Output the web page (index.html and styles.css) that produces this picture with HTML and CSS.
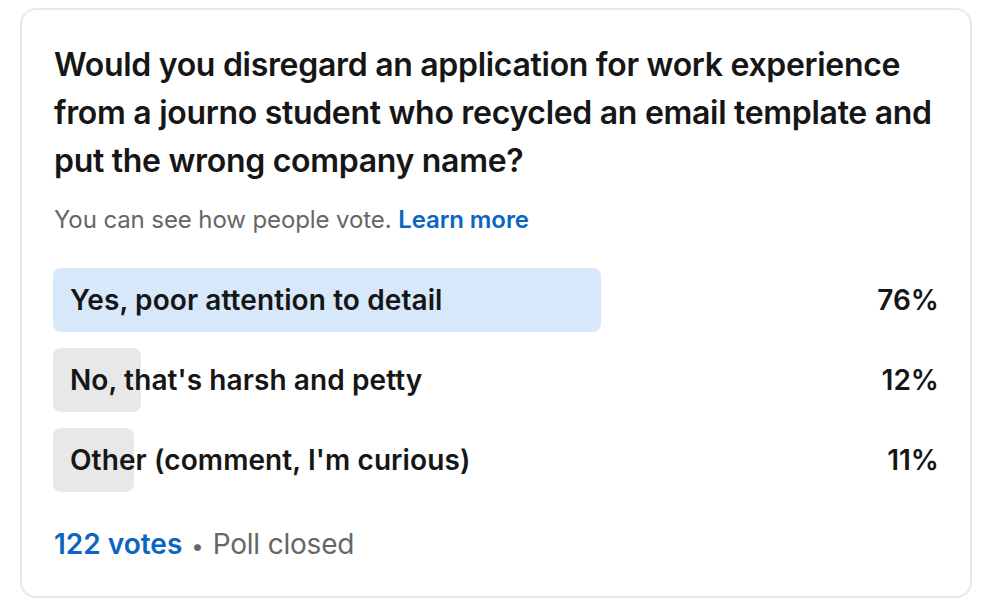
FILE: index.html
```html
<!DOCTYPE html>
<html lang="en">
<head>
<meta charset="utf-8">
<title>Poll</title>
<link rel="stylesheet" href="styles.css">
</head>
<body>
<div class="card">
  <h1 class="question">Would you disregard an application for work experience from a journo student who recycled an email template and put the wrong company name?</h1>
  <p class="note">You can see how people vote. <a class="link" href="#">Learn more</a></p>
  <ul class="options">
    <li class="option">
      <div class="track">
        <div class="fill fill-lead" style="width:548px"></div>
        <span class="label">Yes, poor attention to detail</span>
      </div>
      <span class="pct">76%</span>
    </li>
    <li class="option">
      <div class="track">
        <div class="fill" style="width:88px"></div>
        <span class="label">No, that's harsh and petty</span>
      </div>
      <span class="pct">12%</span>
    </li>
    <li class="option">
      <div class="track">
        <div class="fill" style="width:81px"></div>
        <span class="label">Other (comment, I'm curious)</span>
      </div>
      <span class="pct">11%</span>
    </li>
  </ul>
  <div class="footer">
    <a class="votes" href="#">122 votes</a>
    <span class="dot">•</span>
    <span class="status">Poll closed</span>
  </div>
</div>
</body>
</html>
```
FILE: styles.css
```css
* { box-sizing: border-box; }
html, body { background: #ffffff; }
body {
  margin: 0;
  padding: 8px 16px 8px 20px;
  font-family: Inter, "Noto Sans", "Liberation Sans", sans-serif;
  color: #191919;
}
.card {
  width: 952px;
  height: 590px;
  border: 2px solid #e8e8e8;
  border-radius: 16px;
  padding: 31px 31px 0 31px;
}
.question {
  margin: 0;
  font-size: 32px;
  line-height: 48px;
  font-weight: 600;
  letter-spacing: -0.3px;
  color: #161616;
  padding-left: 1px;
}
.note {
  margin: 19px 0 0;
  padding-left: 1px;
  font-size: 24px;
  line-height: 32px;
  color: #666666;
  letter-spacing: -0.1px;
}
.link {
  color: #0a66c2;
  font-weight: 600;
  text-decoration: none;
}
.options {
  list-style: none;
  margin: 32px 0 0;
  padding: 0;
  display: flex;
  flex-direction: column;
  gap: 16px;
}
.option {
  display: grid;
  grid-template-columns: 1fr auto;
  align-items: center;
  height: 64px;
}
.track {
  display: grid;
  height: 64px;
  align-items: center;
}
.fill, .label { grid-area: 1 / 1; }
.fill {
  height: 64px;
  border-radius: 8px;
  background: #e8e8e8;
}
.fill-lead { background: #d7e8fa; }
.label {
  padding-left: 17px;
  font-size: 28px;
  font-weight: 600;
  letter-spacing: 0.1px;
  color: #161616;
  white-space: nowrap;
}
.pct {
  font-size: 28px;
  font-weight: 600;
  letter-spacing: 0;
  color: #161616;
}
.footer {
  margin-top: 34px;
  padding-left: 1px;
  font-size: 28px;
  line-height: 36px;
  display: flex;
  align-items: baseline;
  gap: 9px;
  letter-spacing: 0;
}
.votes {
  color: #0a66c2;
  font-weight: 600;
  text-decoration: none;
}
.dot { color: #666666; font-size: 22px; }
.status { color: #666666; letter-spacing: -0.2px; }
```
